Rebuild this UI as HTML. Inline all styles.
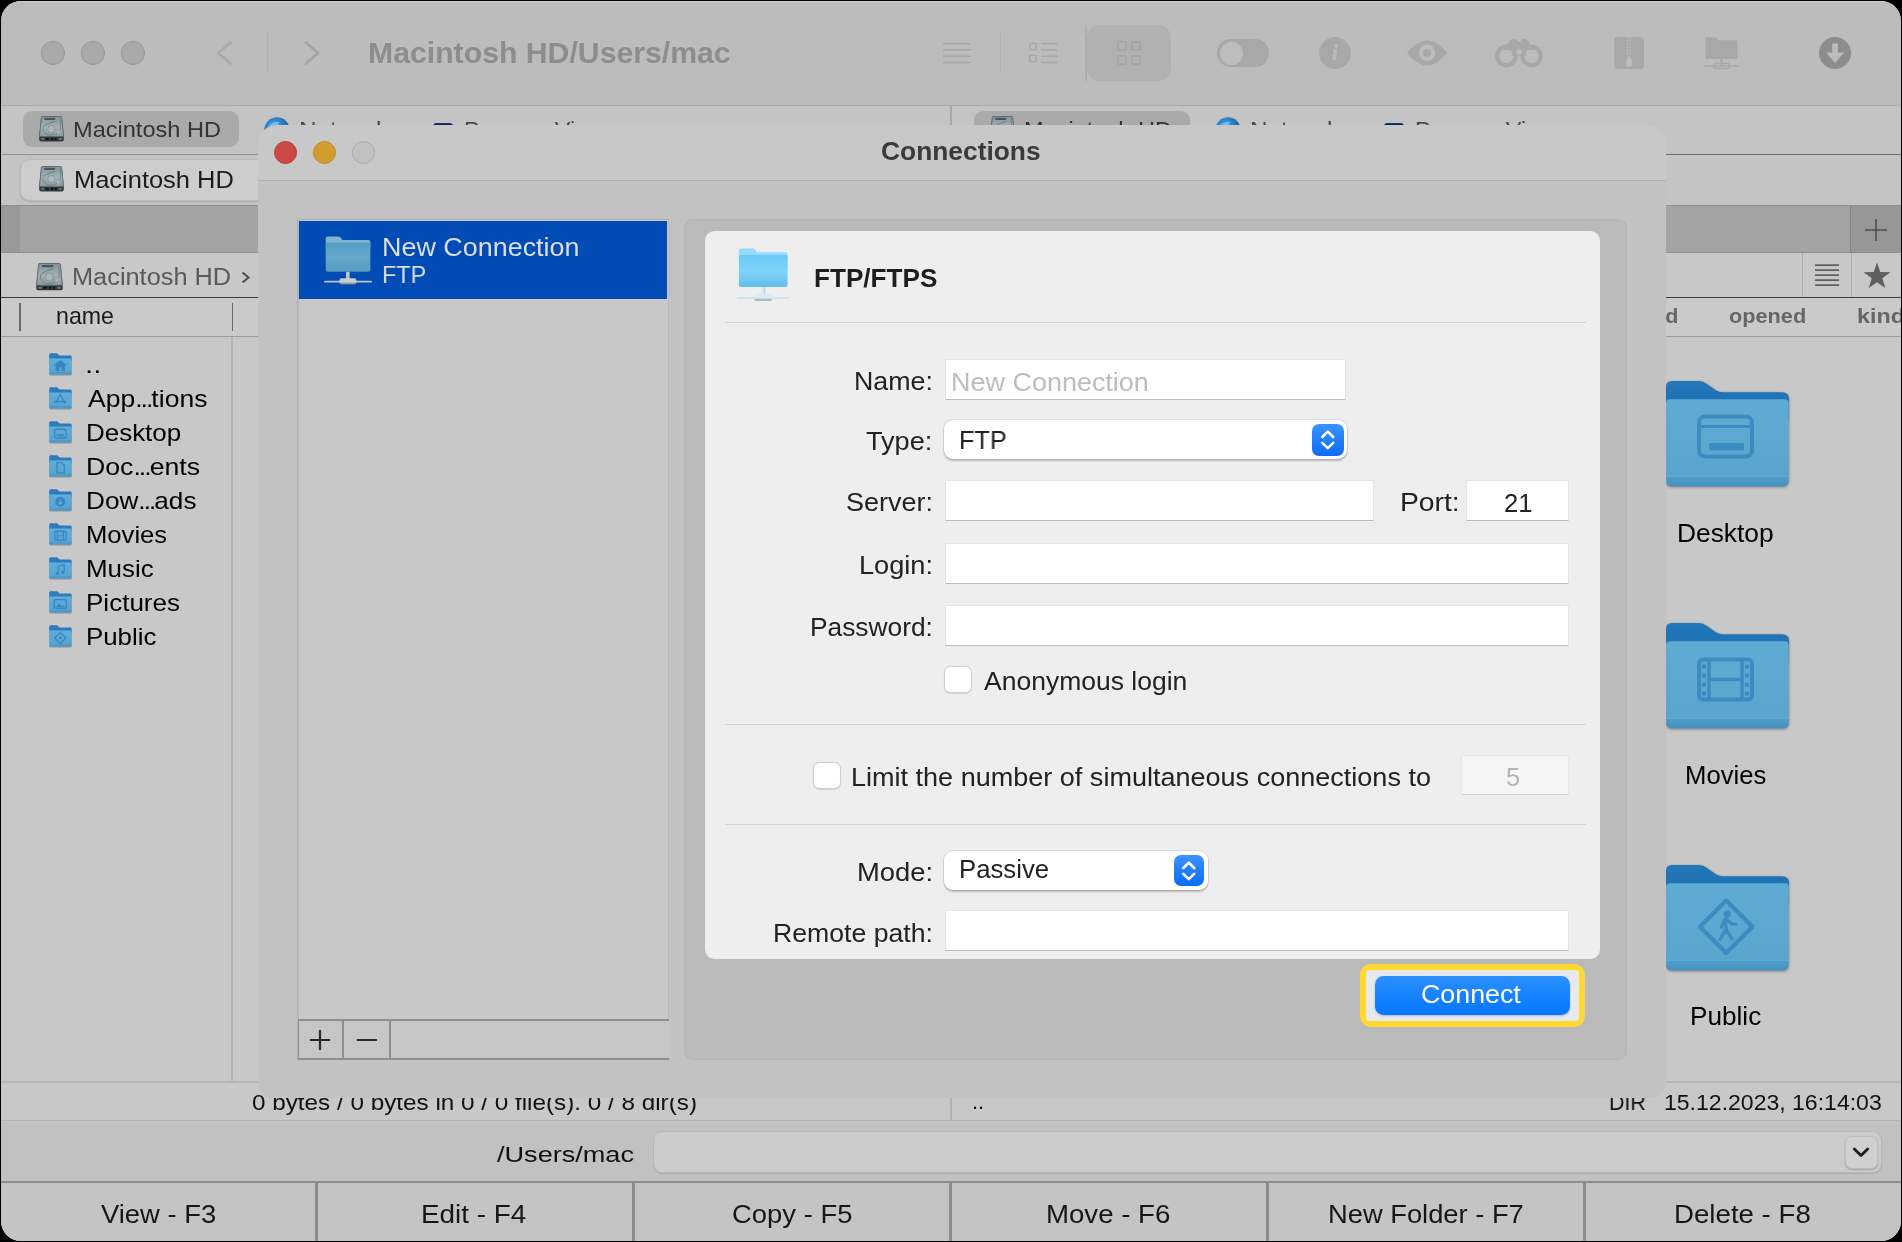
<!DOCTYPE html>
<html><head><meta charset="utf-8"><title>Commander One - Connections</title>
<style>
html,body{margin:0;padding:0;background:#000;}
body{width:1902px;height:1242px;overflow:hidden;position:relative;font-family:"Liberation Sans",sans-serif;}
#win{position:absolute;left:0;top:0;width:1902px;height:1242px;background:#c8c8c8;clip-path:inset(1px 1px 1px 1px round 20px);overflow:hidden;}
#win div,#win svg,#dlg div,#dlg svg{position:absolute;box-sizing:border-box;}
.t{line-height:40px;height:40px;white-space:nowrap;transform-origin:0 0;will-change:transform;}
#dlg{position:absolute;left:258px;top:125px;width:1408px;height:973px;background:#c2c2c2;border-radius:20px 20px 16px 16px;overflow:hidden;}
.inp{background:#fff;border:1px solid #e5e5e5;border-bottom-color:#bcbcbc;}
.chk{background:#fff;border:1px solid #cfcfcf;border-radius:6.5px;box-shadow:0 0.5px 1px rgba(0,0,0,.12);}
.sel{background:#fff;border-radius:9px;box-shadow:0 0 0 1px rgba(0,0,0,.07),0 1.5px 2px rgba(0,0,0,.22);}
.stp{border-radius:7px;background:linear-gradient(#3a93ff,#0a6cf5);}
</style></head><body>
<div id="win">
<div style="left:0px;top:0px;width:1902px;height:105px;background:#bcbcbc;"></div>
<div style="left:0px;top:1px;width:1902px;height:1px;background:#cbcbcb;"></div>
<div style="left:0px;top:104.5px;width:1902px;height:1.5px;background:#a9a9a9;"></div>
<div style="left:41px;top:41px;width:24px;height:24px;border-radius:50%;background:#aaaaaa;border:1px solid #949494;"></div>
<div style="left:81px;top:41px;width:24px;height:24px;border-radius:50%;background:#aaaaaa;border:1px solid #949494;"></div>
<div style="left:121px;top:41px;width:24px;height:24px;border-radius:50%;background:#aaaaaa;border:1px solid #949494;"></div>
<svg style="left:214px;top:38px;" width="20" height="30" viewBox="0 0 20 30"><path d="M16.5 4.5 L4 15 L16.5 25.5" fill="none" stroke="#a9a9a9" stroke-width="2.8" stroke-linecap="round" stroke-linejoin="round"/></svg>
<div style="left:267px;top:33px;width:1px;height:40px;background:#b0b0b0;"></div>
<svg style="left:302px;top:38px;" width="20" height="30" viewBox="0 0 20 30"><path d="M4 4.5 L16 15 L4 25.5" fill="none" stroke="#a4a4a4" stroke-width="2.8" stroke-linecap="round" stroke-linejoin="round"/></svg>
<div class="t" style="left:368.04px;top:32.61px;font-size:30px;color:#8d8d8d;font-weight:bold;transform:scaleX(1.0071);">Macintosh HD/Users/mac</div>
<svg style="left:943px;top:42px;" width="28" height="22" viewBox="0 0 28 22"><rect x="0" y="0.8" width="28" height="1.7" fill="#a8a8a8"/><rect x="0" y="7.1" width="28" height="1.7" fill="#a8a8a8"/><rect x="0" y="13.4" width="28" height="1.7" fill="#a8a8a8"/><rect x="0" y="19.6" width="28" height="1.7" fill="#a8a8a8"/></svg>
<div style="left:1000px;top:33px;width:1px;height:40px;background:#b0b0b0;"></div>
<svg style="left:1029px;top:42px;" width="29" height="22" viewBox="0 0 29 22"><rect x="0.8" y="1.3" width="6.4" height="6.4" rx="1.2" fill="none" stroke="#a8a8a8" stroke-width="1.6"/><rect x="0.8" y="13.3" width="6.4" height="6.4" rx="1.2" fill="none" stroke="#a8a8a8" stroke-width="1.6"/><rect x="12" y="0.8" width="16.5" height="1.7" fill="#a8a8a8"/><rect x="12" y="7.1" width="16.5" height="1.7" fill="#a8a8a8"/><rect x="12" y="13.4" width="16.5" height="1.7" fill="#a8a8a8"/><rect x="12" y="19.6" width="16.5" height="1.7" fill="#a8a8a8"/></svg>
<div style="left:1085px;top:25px;width:2px;height:56px;background:#adadad;"></div>
<div style="left:1087px;top:25px;width:84px;height:56px;background:#b1b1b1;border-radius:13px;"></div>
<svg style="left:1117px;top:41px;" width="24" height="24" viewBox="0 0 24 24"><rect x="0.9" y="0.9" width="8.2" height="8.2" rx="1.2" fill="none" stroke="#a4a4a4" stroke-width="1.7"/><rect x="0.9" y="14.9" width="8.2" height="8.2" rx="1.2" fill="none" stroke="#a4a4a4" stroke-width="1.7"/><rect x="14.9" y="0.9" width="8.2" height="8.2" rx="1.2" fill="none" stroke="#a4a4a4" stroke-width="1.7"/><rect x="14.9" y="14.9" width="8.2" height="8.2" rx="1.2" fill="none" stroke="#a4a4a4" stroke-width="1.7"/></svg>
<div style="left:1217px;top:39px;width:52px;height:28px;border-radius:14px;background:#a8a8a8;"></div>
<div style="left:1219.5px;top:41.5px;width:23.0px;height:23.0px;border-radius:50%;background:#bdbdbd;"></div>
<div style="left:1319px;top:37px;width:32px;height:32px;border-radius:50%;background:#a8a8a8;"></div>
<div class="t" style="left:1319px;width:32px;text-align:center;top:32.5px;font-family:'Liberation Serif',serif;font-style:italic;font-weight:bold;font-size:23px;color:#bcbcbc;">i</div>
<svg style="left:1407px;top:40px;" width="40" height="26" viewBox="0 0 40 26"><path d="M0 13 Q10 0.5 20 0.5 Q30 0.5 40 13 Q30 25.5 20 25.5 Q10 25.5 0 13Z" fill="#a8a8a8"/><circle cx="20" cy="13" r="8.2" fill="#bcbcbc"/><circle cx="20" cy="13" r="4" fill="#a8a8a8"/></svg>
<svg style="left:1495px;top:38px;" width="48" height="30" viewBox="0 0 48 30"><path d="M13 6 Q15 1 19 1 Q22 1 22.5 4 H25.5 Q26 1 29 1 Q33 1 35 6 L40 12 H8 Z" fill="#a8a8a8"/><circle cx="11.5" cy="18" r="9.2" fill="none" stroke="#a8a8a8" stroke-width="4.4"/><circle cx="36.5" cy="18" r="9.2" fill="none" stroke="#a8a8a8" stroke-width="4.4"/><rect x="17" y="8" width="14" height="10" fill="#a8a8a8"/><circle cx="24" cy="14" r="2.6" fill="#bcbcbc"/></svg>
<svg style="left:1614px;top:37px;" width="30" height="32" viewBox="0 0 30 32"><rect x="0" y="0" width="30" height="32" rx="3.5" fill="#a8a8a8"/><path d="M15 0 V19" stroke="#bcbcbc" stroke-width="4.2" stroke-dasharray="1.6 1.6"/><path d="M15 18 Q18.6 24 18.4 27 Q18 30 15 30 Q12 30 11.6 27 Q11.4 24 15 18Z" fill="#bcbcbc"/><path d="M15 0 V19" stroke="#a8a8a8" stroke-width="1.2"/></svg>
<svg style="left:1704px;top:37px;" width="35" height="33" viewBox="0 0 35 33"><path d="M1.5 2 Q1.5 0.3 3.2 0.3 H10.5 Q11.8 0.3 12.6 1.2 L14.6 3.2 H31.5 Q33.5 3.2 33.5 5.2 V20 Q33.5 22 31.5 22 H3.5 Q1.5 22 1.5 20 Z" fill="#a8a8a8"/><rect x="16.3" y="22" width="2.4" height="6" fill="#a8a8a8"/><rect x="0" y="28.2" width="35" height="1.6" fill="#a8a8a8"/><rect x="9.5" y="26.6" width="16" height="5" rx="2" fill="none" stroke="#a8a8a8" stroke-width="1.5"/></svg>
<div style="left:1819px;top:37px;width:32px;height:32px;border-radius:50%;background:#8d8d8d;"></div>
<svg style="left:1819px;top:37px;" width="32" height="32" viewBox="0 0 32 32"><path d="M13.2 6.5 H18.8 V15.5 H24.8 L16 26 L7.2 15.5 H13.2 Z" fill="#bcbcbc"/></svg>
<div style="left:0px;top:106px;width:1902px;height:99px;background:#c4c4c4;"></div>
<div style="left:0px;top:154px;width:951px;height:1px;background:#919191;"></div>
<div style="left:951px;top:154px;width:951px;height:1px;background:#6e6e6e;"></div>
<div style="left:950px;top:106px;width:2px;height:48px;background:#a9a9a9;"></div>
<div style="left:23px;top:111px;width:216px;height:36px;background:#aaaaaa;border-radius:9px;"></div>
<svg style="left:37.5px;top:114.5px;" width="27" height="27" viewBox="0 0 27 27"><defs><linearGradient id="dg" x1="0" y1="0" x2="0" y2="1"><stop offset="0" stop-color="#85949b"/><stop offset="0.55" stop-color="#a3b1b7"/><stop offset="1" stop-color="#8b9aa0"/></linearGradient></defs><path d="M4.6 1.2 H22.4 Q23.7 1.2 23.9 2.5 L25.8 21.2 V24.6 Q25.8 26.4 24 26.4 H3 Q1.2 26.4 1.2 24.6 V21.2 L3.1 2.5 Q3.3 1.2 4.6 1.2Z" fill="#30383c"/><path d="M4.7 1.5 H22.3 Q23.4 1.5 23.6 2.6 L25.5 21.6 H1.5 L3.4 2.6 Q3.6 1.5 4.7 1.5Z" fill="url(#dg)" stroke="#5f6c72" stroke-width="0.7"/><rect x="6.4" y="2.8" width="10.6" height="2.1" rx="0.5" fill="#4b555a"/><path d="M17.4 6.5 C 10.5 8.2, 5 10, 5 13.9 C 5 17.6, 8.6 20.1, 12.6 20.1 C 17.6 20.1, 22 17.4, 22.4 13.6 C 22.7 10, 22.3 6, 21.9 3" fill="none" stroke="#6a787e" stroke-width="0.8"/><circle cx="13.4" cy="14.1" r="3.7" fill="#a9b8be" stroke="#76858b" stroke-width="0.6"/><path d="M19.2 18.2 L21.8 16" stroke="#dfe6e8" stroke-width="0.9"/><rect x="3" y="23" width="3.4" height="1.8" rx="0.5" fill="#6d797e"/><rect x="20.6" y="23" width="3.4" height="1.8" rx="0.5" fill="#6d797e"/><rect x="8" y="22.9" width="2.6" height="2" fill="#111"/><rect x="13" y="22.9" width="2.2" height="2" fill="#111"/><rect x="17" y="22.9" width="1.6" height="2" fill="#111"/></svg>
<div class="t" style="left:72.51px;top:109.77px;font-size:22.6px;color:#333;transform:scaleX(1.0431);">Macintosh HD</div>
<svg style="left:263.5px;top:116.5px;" width="26" height="26" viewBox="0 0 30 30"><defs><radialGradient id="gl" cx="0.4" cy="0.35" r="0.7"><stop offset="0" stop-color="#4aa8e8"/><stop offset="1" stop-color="#0a4f9e"/></radialGradient></defs><circle cx="15" cy="15" r="14.6" fill="url(#gl)"/><path d="M4 12 Q10 4 18 6 Q14 10 16 15 Q10 18 6 16Z M18 18 Q24 14 27 18 Q25 25 19 26Z" fill="#7cc9f2" opacity=".75"/></svg>
<div class="t" style="left:298.85px;top:109.77px;font-size:22.6px;color:#4a4a4a;transform:scaleX(1.0772);">Network</div>
<div style="left:432.7px;top:122.7px;width:20.0px;height:18.299999999999997px;background:#0c2a52;border-radius:3px;border:1.5px solid #10366b;"></div>
<div class="t" style="left:464.13px;top:109.77px;font-size:22.6px;color:#4a4a4a;transform:scaleX(1.0326);">Process Viewer</div>
<div style="left:974px;top:111px;width:216px;height:36px;background:#aaaaaa;border-radius:9px;"></div>
<svg style="left:988.5px;top:114.5px;" width="27" height="27" viewBox="0 0 27 27"><defs><linearGradient id="dg" x1="0" y1="0" x2="0" y2="1"><stop offset="0" stop-color="#85949b"/><stop offset="0.55" stop-color="#a3b1b7"/><stop offset="1" stop-color="#8b9aa0"/></linearGradient></defs><path d="M4.6 1.2 H22.4 Q23.7 1.2 23.9 2.5 L25.8 21.2 V24.6 Q25.8 26.4 24 26.4 H3 Q1.2 26.4 1.2 24.6 V21.2 L3.1 2.5 Q3.3 1.2 4.6 1.2Z" fill="#30383c"/><path d="M4.7 1.5 H22.3 Q23.4 1.5 23.6 2.6 L25.5 21.6 H1.5 L3.4 2.6 Q3.6 1.5 4.7 1.5Z" fill="url(#dg)" stroke="#5f6c72" stroke-width="0.7"/><rect x="6.4" y="2.8" width="10.6" height="2.1" rx="0.5" fill="#4b555a"/><path d="M17.4 6.5 C 10.5 8.2, 5 10, 5 13.9 C 5 17.6, 8.6 20.1, 12.6 20.1 C 17.6 20.1, 22 17.4, 22.4 13.6 C 22.7 10, 22.3 6, 21.9 3" fill="none" stroke="#6a787e" stroke-width="0.8"/><circle cx="13.4" cy="14.1" r="3.7" fill="#a9b8be" stroke="#76858b" stroke-width="0.6"/><path d="M19.2 18.2 L21.8 16" stroke="#dfe6e8" stroke-width="0.9"/><rect x="3" y="23" width="3.4" height="1.8" rx="0.5" fill="#6d797e"/><rect x="20.6" y="23" width="3.4" height="1.8" rx="0.5" fill="#6d797e"/><rect x="8" y="22.9" width="2.6" height="2" fill="#111"/><rect x="13" y="22.9" width="2.2" height="2" fill="#111"/><rect x="17" y="22.9" width="1.6" height="2" fill="#111"/></svg>
<div class="t" style="left:1023.51px;top:109.77px;font-size:22.6px;color:#333;transform:scaleX(1.0431);">Macintosh HD</div>
<svg style="left:1214.5px;top:116.5px;" width="26" height="26" viewBox="0 0 30 30"><defs><radialGradient id="gl" cx="0.4" cy="0.35" r="0.7"><stop offset="0" stop-color="#4aa8e8"/><stop offset="1" stop-color="#0a4f9e"/></radialGradient></defs><circle cx="15" cy="15" r="14.6" fill="url(#gl)"/><path d="M4 12 Q10 4 18 6 Q14 10 16 15 Q10 18 6 16Z M18 18 Q24 14 27 18 Q25 25 19 26Z" fill="#7cc9f2" opacity=".75"/></svg>
<div class="t" style="left:1249.85px;top:109.77px;font-size:22.6px;color:#4a4a4a;transform:scaleX(1.0772);">Network</div>
<div style="left:1383.7px;top:122.7px;width:20.0px;height:18.299999999999997px;background:#0c2a52;border-radius:3px;border:1.5px solid #10366b;"></div>
<div class="t" style="left:1415.13px;top:109.77px;font-size:22.6px;color:#4a4a4a;transform:scaleX(1.0326);">Process Viewer</div>
<div style="left:20px;top:159px;width:450px;height:42px;background:#cdcdcd;border:1px solid #bababa;border-radius:10px;box-shadow:0 1px 2px rgba(0,0,0,.16);"></div>
<svg style="left:37.5px;top:165px;" width="27" height="27" viewBox="0 0 27 27"><defs><linearGradient id="dg" x1="0" y1="0" x2="0" y2="1"><stop offset="0" stop-color="#85949b"/><stop offset="0.55" stop-color="#a3b1b7"/><stop offset="1" stop-color="#8b9aa0"/></linearGradient></defs><path d="M4.6 1.2 H22.4 Q23.7 1.2 23.9 2.5 L25.8 21.2 V24.6 Q25.8 26.4 24 26.4 H3 Q1.2 26.4 1.2 24.6 V21.2 L3.1 2.5 Q3.3 1.2 4.6 1.2Z" fill="#30383c"/><path d="M4.7 1.5 H22.3 Q23.4 1.5 23.6 2.6 L25.5 21.6 H1.5 L3.4 2.6 Q3.6 1.5 4.7 1.5Z" fill="url(#dg)" stroke="#5f6c72" stroke-width="0.7"/><rect x="6.4" y="2.8" width="10.6" height="2.1" rx="0.5" fill="#4b555a"/><path d="M17.4 6.5 C 10.5 8.2, 5 10, 5 13.9 C 5 17.6, 8.6 20.1, 12.6 20.1 C 17.6 20.1, 22 17.4, 22.4 13.6 C 22.7 10, 22.3 6, 21.9 3" fill="none" stroke="#6a787e" stroke-width="0.8"/><circle cx="13.4" cy="14.1" r="3.7" fill="#a9b8be" stroke="#76858b" stroke-width="0.6"/><path d="M19.2 18.2 L21.8 16" stroke="#dfe6e8" stroke-width="0.9"/><rect x="3" y="23" width="3.4" height="1.8" rx="0.5" fill="#6d797e"/><rect x="20.6" y="23" width="3.4" height="1.8" rx="0.5" fill="#6d797e"/><rect x="8" y="22.9" width="2.6" height="2" fill="#111"/><rect x="13" y="22.9" width="2.2" height="2" fill="#111"/><rect x="17" y="22.9" width="1.6" height="2" fill="#111"/></svg>
<div class="t" style="left:73.96px;top:160.12px;font-size:23.9px;color:#1c1c1c;transform:scaleX(1.0652);">Macintosh HD</div>
<div style="left:0px;top:205px;width:1902px;height:48px;background:#a4a4a4;border-top:1.5px solid #8d8d8d;border-bottom:1.5px solid #8d8d8d;"></div>
<div style="left:0px;top:206px;width:20px;height:46px;background:#999999;"></div>
<div style="left:1850px;top:205px;width:52px;height:48px;background:#979797;border-left:1.5px solid #838383;border-top:1.5px solid #8d8d8d;border-bottom:1.5px solid #8d8d8d;"></div>
<svg style="left:1864px;top:218px;" width="24" height="24" viewBox="0 0 24 24"><path d="M12 1 V23 M1 12 H23" stroke="#4e4e4e" stroke-width="1.6"/></svg>
<div style="left:950px;top:205px;width:2px;height:48px;background:#8d8d8d;"></div>
<div style="left:0px;top:253px;width:1902px;height:44px;background:#c8c8c8;"></div>
<svg style="left:34.5px;top:262px;" width="29" height="29" viewBox="0 0 27 27"><defs><linearGradient id="dg" x1="0" y1="0" x2="0" y2="1"><stop offset="0" stop-color="#85949b"/><stop offset="0.55" stop-color="#a3b1b7"/><stop offset="1" stop-color="#8b9aa0"/></linearGradient></defs><path d="M4.6 1.2 H22.4 Q23.7 1.2 23.9 2.5 L25.8 21.2 V24.6 Q25.8 26.4 24 26.4 H3 Q1.2 26.4 1.2 24.6 V21.2 L3.1 2.5 Q3.3 1.2 4.6 1.2Z" fill="#30383c"/><path d="M4.7 1.5 H22.3 Q23.4 1.5 23.6 2.6 L25.5 21.6 H1.5 L3.4 2.6 Q3.6 1.5 4.7 1.5Z" fill="url(#dg)" stroke="#5f6c72" stroke-width="0.7"/><rect x="6.4" y="2.8" width="10.6" height="2.1" rx="0.5" fill="#4b555a"/><path d="M17.4 6.5 C 10.5 8.2, 5 10, 5 13.9 C 5 17.6, 8.6 20.1, 12.6 20.1 C 17.6 20.1, 22 17.4, 22.4 13.6 C 22.7 10, 22.3 6, 21.9 3" fill="none" stroke="#6a787e" stroke-width="0.8"/><circle cx="13.4" cy="14.1" r="3.7" fill="#a9b8be" stroke="#76858b" stroke-width="0.6"/><path d="M19.2 18.2 L21.8 16" stroke="#dfe6e8" stroke-width="0.9"/><rect x="3" y="23" width="3.4" height="1.8" rx="0.5" fill="#6d797e"/><rect x="20.6" y="23" width="3.4" height="1.8" rx="0.5" fill="#6d797e"/><rect x="8" y="22.9" width="2.6" height="2" fill="#111"/><rect x="13" y="22.9" width="2.2" height="2" fill="#111"/><rect x="17" y="22.9" width="1.6" height="2" fill="#111"/></svg>
<div class="t" style="left:72.27px;top:256.83px;font-size:23px;color:#595959;transform:scaleX(1.1020);">Macintosh HD</div>
<svg style="left:240px;top:266px;" width="12" height="22" viewBox="0 0 12 22"><path d="M2.5 6.5 L8.5 11.5 L2.5 16.5" fill="none" stroke="#4d4d4d" stroke-width="2"/></svg>
<div style="left:1802px;top:253px;width:1px;height:44px;background:#adadad;"></div>
<div style="left:1851px;top:253px;width:1px;height:44px;background:#adadad;"></div>
<svg style="left:1815px;top:264px;" width="24" height="23" viewBox="0 0 24 23"><rect x="0" y="0.3" width="24" height="1.7" fill="#5f5f5f"/><rect x="0" y="5.3" width="24" height="1.7" fill="#5f5f5f"/><rect x="0" y="10.3" width="24" height="1.7" fill="#5f5f5f"/><rect x="0" y="15.3" width="24" height="1.7" fill="#5f5f5f"/><rect x="0" y="20.3" width="24" height="1.7" fill="#5f5f5f"/></svg>
<svg style="left:1863px;top:262px;" width="28" height="27" viewBox="0 0 28 27"><path d="M14 0.5 L17.3 10 L27.4 10.2 L19.3 16.3 L22.3 26 L14 20.2 L5.7 26 L8.7 16.3 L0.6 10.2 L10.7 10 Z" fill="#5f5f5f"/></svg>
<div style="left:0px;top:296.5px;width:1902px;height:1.5px;background:#3c3c3c;"></div>
<div style="left:0px;top:298px;width:1902px;height:39px;background:#cacaca;"></div>
<div style="left:19px;top:303px;width:1.5px;height:28px;background:#6a6a6a;"></div>
<div style="left:231.5px;top:303px;width:1.5px;height:28px;background:#6a6a6a;"></div>
<div class="t" style="left:56.39px;top:295.96px;font-size:23.2px;color:#1a1a1a;transform:scaleX(0.9988);">name</div>
<div class="t" style="left:1588.60px;top:295.57px;font-size:20px;color:#666;font-weight:bold;transform:scaleX(1.0731);">modified</div>
<div class="t" style="left:1729.24px;top:295.57px;font-size:20px;color:#666;font-weight:bold;transform:scaleX(1.0854);">opened</div>
<div class="t" style="left:1856.67px;top:295.57px;font-size:20px;color:#666;font-weight:bold;transform:scaleX(1.1641);">kind</div>
<div style="left:0px;top:336px;width:1902px;height:1px;background:#9c9c9c;"></div>
<div style="left:0px;top:337px;width:1902px;height:745px;background:#c8c8c8;"></div>
<div style="left:231px;top:337px;width:2px;height:745px;background:#b3b3b3;"></div>
<div style="left:950px;top:253px;width:2px;height:868px;background:#b1b1b1;"></div>
<svg style="left:48.7px;top:353.2px;filter:drop-shadow(0 1px 0.6px rgba(0,0,0,.28));" width="23" height="22" viewBox="0 0 23 22"><defs><linearGradient id="sf" x1="0" y1="0" x2="0" y2="1"><stop offset="0" stop-color="#62aedb"/><stop offset="0.85" stop-color="#58a4d1"/><stop offset="0.87" stop-color="#4b99ca"/><stop offset="1" stop-color="#4f9dcd"/></linearGradient></defs><path d="M0.3 1.4 Q0.3 0.3 1.4 0.3 H7.6 Q8.4 0.3 9 0.9 L10.6 2.6 H21.3 Q22.6 2.6 22.6 3.9 V8 H0.3 Z" fill="#2a7cbf"/><path d="M0.3 5.4 H22.6 V20.2 Q22.6 21.5 21.3 21.5 H1.6 Q0.3 21.5 0.3 20.2 Z" fill="url(#sf)"/><g transform="translate(11.3 12.9) scale(1.32) translate(-11.5 -12.8)"><path d="M11.5 8.2 L6.6 12.4 H8 V16.6 H10.6 V13.8 H12.4 V16.6 H15 V12.4 H16.4 Z" fill="#3787c3"/></g></svg>
<div class="t" style="left:85.35px;top:344.89px;font-size:23.4px;color:#000;transform:scaleX(1.2596);">..</div>
<svg style="left:48.7px;top:387.2px;filter:drop-shadow(0 1px 0.6px rgba(0,0,0,.28));" width="23" height="22" viewBox="0 0 23 22"><defs><linearGradient id="sf" x1="0" y1="0" x2="0" y2="1"><stop offset="0" stop-color="#62aedb"/><stop offset="0.85" stop-color="#58a4d1"/><stop offset="0.87" stop-color="#4b99ca"/><stop offset="1" stop-color="#4f9dcd"/></linearGradient></defs><path d="M0.3 1.4 Q0.3 0.3 1.4 0.3 H7.6 Q8.4 0.3 9 0.9 L10.6 2.6 H21.3 Q22.6 2.6 22.6 3.9 V8 H0.3 Z" fill="#2a7cbf"/><path d="M0.3 5.4 H22.6 V20.2 Q22.6 21.5 21.3 21.5 H1.6 Q0.3 21.5 0.3 20.2 Z" fill="url(#sf)"/><g transform="translate(11.3 12.9) scale(1.32) translate(-11.5 -12.8)"><path d="M11.5 8.5 L8 15.5 M11.5 8.5 L15 15.5 M7 14 H16" stroke="#3787c3" stroke-width="1.1" fill="none"/></g></svg>
<div class="t" style="left:88.00px;top:378.89px;font-size:23.4px;color:#000;transform:scaleX(1.1342);">App<span style="letter-spacing:-1.75px">...</span>tions</div>
<svg style="left:48.7px;top:421.2px;filter:drop-shadow(0 1px 0.6px rgba(0,0,0,.28));" width="23" height="22" viewBox="0 0 23 22"><defs><linearGradient id="sf" x1="0" y1="0" x2="0" y2="1"><stop offset="0" stop-color="#62aedb"/><stop offset="0.85" stop-color="#58a4d1"/><stop offset="0.87" stop-color="#4b99ca"/><stop offset="1" stop-color="#4f9dcd"/></linearGradient></defs><path d="M0.3 1.4 Q0.3 0.3 1.4 0.3 H7.6 Q8.4 0.3 9 0.9 L10.6 2.6 H21.3 Q22.6 2.6 22.6 3.9 V8 H0.3 Z" fill="#2a7cbf"/><path d="M0.3 5.4 H22.6 V20.2 Q22.6 21.5 21.3 21.5 H1.6 Q0.3 21.5 0.3 20.2 Z" fill="url(#sf)"/><g transform="translate(11.3 12.9) scale(1.32) translate(-11.5 -12.8)"><rect x="7.2" y="9.3" width="8.6" height="6.6" rx="1" fill="none" stroke="#3787c3" stroke-width="1"/><rect x="8.8" y="13" width="5.4" height="1.5" fill="#3787c3"/></g></svg>
<div class="t" style="left:85.92px;top:412.89px;font-size:23.4px;color:#000;transform:scaleX(1.1091);">Desktop</div>
<svg style="left:48.7px;top:455.2px;filter:drop-shadow(0 1px 0.6px rgba(0,0,0,.28));" width="23" height="22" viewBox="0 0 23 22"><defs><linearGradient id="sf" x1="0" y1="0" x2="0" y2="1"><stop offset="0" stop-color="#62aedb"/><stop offset="0.85" stop-color="#58a4d1"/><stop offset="0.87" stop-color="#4b99ca"/><stop offset="1" stop-color="#4f9dcd"/></linearGradient></defs><path d="M0.3 1.4 Q0.3 0.3 1.4 0.3 H7.6 Q8.4 0.3 9 0.9 L10.6 2.6 H21.3 Q22.6 2.6 22.6 3.9 V8 H0.3 Z" fill="#2a7cbf"/><path d="M0.3 5.4 H22.6 V20.2 Q22.6 21.5 21.3 21.5 H1.6 Q0.3 21.5 0.3 20.2 Z" fill="url(#sf)"/><g transform="translate(11.3 12.9) scale(1.32) translate(-11.5 -12.8)"><path d="M9 8.8 H12.6 L14.6 10.8 V16.6 H9 Z" fill="none" stroke="#3787c3" stroke-width="1"/></g></svg>
<div class="t" style="left:85.87px;top:446.89px;font-size:23.4px;color:#000;transform:scaleX(1.1403);">Doc<span style="letter-spacing:-1.75px">...</span>ents</div>
<svg style="left:48.7px;top:489.2px;filter:drop-shadow(0 1px 0.6px rgba(0,0,0,.28));" width="23" height="22" viewBox="0 0 23 22"><defs><linearGradient id="sf" x1="0" y1="0" x2="0" y2="1"><stop offset="0" stop-color="#62aedb"/><stop offset="0.85" stop-color="#58a4d1"/><stop offset="0.87" stop-color="#4b99ca"/><stop offset="1" stop-color="#4f9dcd"/></linearGradient></defs><path d="M0.3 1.4 Q0.3 0.3 1.4 0.3 H7.6 Q8.4 0.3 9 0.9 L10.6 2.6 H21.3 Q22.6 2.6 22.6 3.9 V8 H0.3 Z" fill="#2a7cbf"/><path d="M0.3 5.4 H22.6 V20.2 Q22.6 21.5 21.3 21.5 H1.6 Q0.3 21.5 0.3 20.2 Z" fill="url(#sf)"/><g transform="translate(11.3 12.9) scale(1.32) translate(-11.5 -12.8)"><circle cx="11.5" cy="12.7" r="3.8" fill="#3787c3"/><path d="M11.5 10.6 V14.4 M9.9 13 L11.5 14.6 L13.1 13" stroke="#66acd6" stroke-width="0.9" fill="none"/></g></svg>
<div class="t" style="left:85.91px;top:480.89px;font-size:23.4px;color:#000;transform:scaleX(1.1185);">Dow<span style="letter-spacing:-1.75px">...</span>ads</div>
<svg style="left:48.7px;top:523.2px;filter:drop-shadow(0 1px 0.6px rgba(0,0,0,.28));" width="23" height="22" viewBox="0 0 23 22"><defs><linearGradient id="sf" x1="0" y1="0" x2="0" y2="1"><stop offset="0" stop-color="#62aedb"/><stop offset="0.85" stop-color="#58a4d1"/><stop offset="0.87" stop-color="#4b99ca"/><stop offset="1" stop-color="#4f9dcd"/></linearGradient></defs><path d="M0.3 1.4 Q0.3 0.3 1.4 0.3 H7.6 Q8.4 0.3 9 0.9 L10.6 2.6 H21.3 Q22.6 2.6 22.6 3.9 V8 H0.3 Z" fill="#2a7cbf"/><path d="M0.3 5.4 H22.6 V20.2 Q22.6 21.5 21.3 21.5 H1.6 Q0.3 21.5 0.3 20.2 Z" fill="url(#sf)"/><g transform="translate(11.3 12.9) scale(1.32) translate(-11.5 -12.8)"><rect x="7.2" y="9.3" width="8.6" height="6.8" rx="0.8" fill="none" stroke="#3787c3" stroke-width="1"/><path d="M9.2 9.3 V16.1 M13.8 9.3 V16.1 M9.2 12.7 H13.8" stroke="#3787c3" stroke-width="0.9"/></g></svg>
<div class="t" style="left:85.95px;top:514.89px;font-size:23.4px;color:#000;transform:scaleX(1.0953);">Movies</div>
<svg style="left:48.7px;top:557.2px;filter:drop-shadow(0 1px 0.6px rgba(0,0,0,.28));" width="23" height="22" viewBox="0 0 23 22"><defs><linearGradient id="sf" x1="0" y1="0" x2="0" y2="1"><stop offset="0" stop-color="#62aedb"/><stop offset="0.85" stop-color="#58a4d1"/><stop offset="0.87" stop-color="#4b99ca"/><stop offset="1" stop-color="#4f9dcd"/></linearGradient></defs><path d="M0.3 1.4 Q0.3 0.3 1.4 0.3 H7.6 Q8.4 0.3 9 0.9 L10.6 2.6 H21.3 Q22.6 2.6 22.6 3.9 V8 H0.3 Z" fill="#2a7cbf"/><path d="M0.3 5.4 H22.6 V20.2 Q22.6 21.5 21.3 21.5 H1.6 Q0.3 21.5 0.3 20.2 Z" fill="url(#sf)"/><g transform="translate(11.3 12.9) scale(1.32) translate(-11.5 -12.8)"><path d="M10 15.5 V10 L14.4 9 V14.5" stroke="#3787c3" stroke-width="1" fill="none"/><circle cx="9.1" cy="15.5" r="1.2" fill="#3787c3"/><circle cx="13.5" cy="14.5" r="1.2" fill="#3787c3"/></g></svg>
<div class="t" style="left:85.92px;top:548.89px;font-size:23.4px;color:#000;transform:scaleX(1.1089);">Music</div>
<svg style="left:48.7px;top:591.2px;filter:drop-shadow(0 1px 0.6px rgba(0,0,0,.28));" width="23" height="22" viewBox="0 0 23 22"><defs><linearGradient id="sf" x1="0" y1="0" x2="0" y2="1"><stop offset="0" stop-color="#62aedb"/><stop offset="0.85" stop-color="#58a4d1"/><stop offset="0.87" stop-color="#4b99ca"/><stop offset="1" stop-color="#4f9dcd"/></linearGradient></defs><path d="M0.3 1.4 Q0.3 0.3 1.4 0.3 H7.6 Q8.4 0.3 9 0.9 L10.6 2.6 H21.3 Q22.6 2.6 22.6 3.9 V8 H0.3 Z" fill="#2a7cbf"/><path d="M0.3 5.4 H22.6 V20.2 Q22.6 21.5 21.3 21.5 H1.6 Q0.3 21.5 0.3 20.2 Z" fill="url(#sf)"/><g transform="translate(11.3 12.9) scale(1.32) translate(-11.5 -12.8)"><rect x="7" y="9.5" width="9" height="6.6" rx="0.8" fill="none" stroke="#3787c3" stroke-width="1"/><path d="M8 15 L10.5 12.5 L12.3 14.3 L13.4 13.4 L15 15 Z" fill="#3787c3"/></g></svg>
<div class="t" style="left:85.92px;top:582.89px;font-size:23.4px;color:#000;transform:scaleX(1.1127);">Pictures</div>
<svg style="left:48.7px;top:625.2px;filter:drop-shadow(0 1px 0.6px rgba(0,0,0,.28));" width="23" height="22" viewBox="0 0 23 22"><defs><linearGradient id="sf" x1="0" y1="0" x2="0" y2="1"><stop offset="0" stop-color="#62aedb"/><stop offset="0.85" stop-color="#58a4d1"/><stop offset="0.87" stop-color="#4b99ca"/><stop offset="1" stop-color="#4f9dcd"/></linearGradient></defs><path d="M0.3 1.4 Q0.3 0.3 1.4 0.3 H7.6 Q8.4 0.3 9 0.9 L10.6 2.6 H21.3 Q22.6 2.6 22.6 3.9 V8 H0.3 Z" fill="#2a7cbf"/><path d="M0.3 5.4 H22.6 V20.2 Q22.6 21.5 21.3 21.5 H1.6 Q0.3 21.5 0.3 20.2 Z" fill="url(#sf)"/><g transform="translate(11.3 12.9) scale(1.32) translate(-11.5 -12.8)"><path d="M11.5 8.6 L15.7 12.8 L11.5 17 L7.3 12.8 Z" fill="none" stroke="#3787c3" stroke-width="1"/><circle cx="11.5" cy="12.8" r="1.1" fill="#3787c3"/></g></svg>
<div class="t" style="left:85.93px;top:616.89px;font-size:23.4px;color:#000;transform:scaleX(1.1043);">Public</div>
<svg style="left:1666px;top:381px;filter:drop-shadow(0 1.5px 1.5px rgba(0,0,0,.38));" width="123" height="108" viewBox="0 0 123 108"><defs><linearGradient id="bf" x1="0" y1="0" x2="0" y2="1"><stop offset="0" stop-color="#60abd3"/><stop offset="0.875" stop-color="#5aa5cd"/><stop offset="0.88" stop-color="#6cb3d9"/><stop offset="0.895" stop-color="#509dc9"/><stop offset="1" stop-color="#4391c2"/></linearGradient><linearGradient id="bb" x1="0" y1="0" x2="0" y2="1"><stop offset="0" stop-color="#2378b9"/><stop offset="1" stop-color="#1a6bad"/></linearGradient></defs><path d="M0 6 Q0 0 6 0 H33 Q37.5 0 41 3 L50 9.3 Q53 11.2 57 11.2 H116 Q123 11.2 123 18 V40 H0 Z" fill="url(#bb)"/><path d="M0 22.5 Q0 18.3 4.2 18.3 H118.6 Q122.8 18.3 122.8 22.5 V99 Q122.8 105.3 116.5 105.3 H6.3 Q0 105.3 0 99 Z" fill="url(#bf)"/><g transform="translate(-4 0.6)"><rect x="37" y="35" width="53" height="40" rx="6" fill="none" stroke="#3c8cc1" stroke-width="4"/><path d="M37 45 H90" stroke="#3c8cc1" stroke-width="3"/><rect x="47" y="61.5" width="35" height="7.3" rx="1.5" fill="#3c8cc1"/></g></svg>
<div class="t" style="left:1676.89px;top:512.84px;font-size:25px;color:#000;transform:scaleX(1.0539);">Desktop</div>
<svg style="left:1666px;top:623px;filter:drop-shadow(0 1.5px 1.5px rgba(0,0,0,.38));" width="123" height="108" viewBox="0 0 123 108"><defs><linearGradient id="bf" x1="0" y1="0" x2="0" y2="1"><stop offset="0" stop-color="#60abd3"/><stop offset="0.875" stop-color="#5aa5cd"/><stop offset="0.88" stop-color="#6cb3d9"/><stop offset="0.895" stop-color="#509dc9"/><stop offset="1" stop-color="#4391c2"/></linearGradient><linearGradient id="bb" x1="0" y1="0" x2="0" y2="1"><stop offset="0" stop-color="#2378b9"/><stop offset="1" stop-color="#1a6bad"/></linearGradient></defs><path d="M0 6 Q0 0 6 0 H33 Q37.5 0 41 3 L50 9.3 Q53 11.2 57 11.2 H116 Q123 11.2 123 18 V40 H0 Z" fill="url(#bb)"/><path d="M0 22.5 Q0 18.3 4.2 18.3 H118.6 Q122.8 18.3 122.8 22.5 V99 Q122.8 105.3 116.5 105.3 H6.3 Q0 105.3 0 99 Z" fill="url(#bf)"/><g transform="translate(-4 0.6)"><rect x="37" y="36" width="53" height="40" rx="4" fill="none" stroke="#3c8cc1" stroke-width="4"/><path d="M47 36 V76 M80 36 V76 M47 56 H80" stroke="#3c8cc1" stroke-width="3.5"/><g fill="#3c8cc1"><rect x="40" y="41" width="4" height="4"/><rect x="40" y="50" width="4" height="4"/><rect x="40" y="59" width="4" height="4"/><rect x="40" y="68" width="4" height="4"/><rect x="83" y="41" width="4" height="4"/><rect x="83" y="50" width="4" height="4"/><rect x="83" y="59" width="4" height="4"/><rect x="83" y="68" width="4" height="4"/></g></g></svg>
<div class="t" style="left:1684.55px;top:754.54px;font-size:25px;color:#000;transform:scaleX(1.0265);">Movies</div>
<svg style="left:1666px;top:865px;filter:drop-shadow(0 1.5px 1.5px rgba(0,0,0,.38));" width="123" height="108" viewBox="0 0 123 108"><defs><linearGradient id="bf" x1="0" y1="0" x2="0" y2="1"><stop offset="0" stop-color="#60abd3"/><stop offset="0.875" stop-color="#5aa5cd"/><stop offset="0.88" stop-color="#6cb3d9"/><stop offset="0.895" stop-color="#509dc9"/><stop offset="1" stop-color="#4391c2"/></linearGradient><linearGradient id="bb" x1="0" y1="0" x2="0" y2="1"><stop offset="0" stop-color="#2378b9"/><stop offset="1" stop-color="#1a6bad"/></linearGradient></defs><path d="M0 6 Q0 0 6 0 H33 Q37.5 0 41 3 L50 9.3 Q53 11.2 57 11.2 H116 Q123 11.2 123 18 V40 H0 Z" fill="url(#bb)"/><path d="M0 22.5 Q0 18.3 4.2 18.3 H118.6 Q122.8 18.3 122.8 22.5 V99 Q122.8 105.3 116.5 105.3 H6.3 Q0 105.3 0 99 Z" fill="url(#bf)"/><g transform="translate(-4 0.6)"><g transform="translate(0.7 4.7) translate(63.5 56.5) scale(1.07) translate(-63.5 -56.5)"><path d="M63.5 32 L88 56.5 L63.5 81 L39 56.5 Z" fill="none" stroke="#3c8cc1" stroke-width="4" stroke-linejoin="round"/><circle cx="64.5" cy="44.5" r="3.4" fill="#3c8cc1"/><path d="M63 49 L59 57 M63 49 L69 54 L73 54 M62 50 L64 60 L69 68 M63 59 L58 68" stroke="#3c8cc1" stroke-width="3.2" fill="none" stroke-linecap="round" stroke-linejoin="round"/></g></g></svg>
<div class="t" style="left:1689.71px;top:996.24px;font-size:25px;color:#000;transform:scaleX(1.0458);">Public</div>
<div style="left:0px;top:1081px;width:1902px;height:40px;background:#c8c8c8;border-top:2px solid #b5b5b5;border-bottom:1.5px solid #b2b2b2;"></div>
<div style="left:950px;top:1082px;width:2px;height:39px;background:#b1b1b1;"></div>
<div class="t" style="left:252.15px;top:1082.72px;font-size:21.6px;color:#111;transform:scaleX(1.1236);">0 bytes / 0 bytes in 0 / 0 file(s). 0 / 8 dir(s)</div>
<div class="t" style="left:971.52px;top:1082.38px;font-size:22px;color:#111;transform:scaleX(1.0000);">..</div>
<div class="t" style="left:1609.29px;top:1082.55px;font-size:21.5px;color:#111;transform:scaleX(0.9915);">DIR</div>
<div class="t" style="left:1663.77px;top:1082.55px;font-size:21.5px;color:#111;transform:scaleX(1.0712);">15.12.2023, 16:14:03</div>
<div style="left:0px;top:1121px;width:1902px;height:61px;background:#c1c1c1;"></div>
<div class="t" style="left:497.00px;top:1135.45px;font-size:21.8px;color:#111;transform:scaleX(1.2430);">/Users/mac</div>
<div style="left:653px;top:1131px;width:1229px;height:42px;background:#cbcbcb;border:1px solid #b7b7b7;border-radius:9px;box-shadow:0 1px 1px rgba(0,0,0,.10);"></div>
<div style="left:1844.5px;top:1136px;width:33.0px;height:32.5px;background:#d0d0d0;border:1px solid #bdbdbd;border-radius:7px;box-shadow:0 1px 1.5px rgba(0,0,0,.2);"></div>
<svg style="left:1852px;top:1145px;" width="18" height="14" viewBox="0 0 18 14"><path d="M2.3 4 L9 10.5 L15.7 4" fill="none" stroke="#1e1e1e" stroke-width="2.8" stroke-linecap="round" stroke-linejoin="round"/></svg>
<div style="left:0px;top:1180.5px;width:1902px;height:61.5px;background:#c4c4c4;border-top:2.5px solid #8b8b8b;"></div>
<div class="t" style="left:101.36px;top:1193.69px;font-size:25.7px;color:#161616;transform:scaleX(1.0663);">View - F3</div>
<div style="left:315.2px;top:1182px;width:2.6000000000000227px;height:60px;background:#8b8b8b;"></div>
<div class="t" style="left:421.27px;top:1193.69px;font-size:25.7px;color:#161616;transform:scaleX(1.0853);">Edit - F4</div>
<div style="left:632.2px;top:1182px;width:2.599999999999909px;height:60px;background:#8b8b8b;"></div>
<div class="t" style="left:732.13px;top:1193.69px;font-size:25.7px;color:#161616;transform:scaleX(1.0678);">Copy - F5</div>
<div style="left:949.2px;top:1182px;width:2.599999999999909px;height:60px;background:#8b8b8b;"></div>
<div class="t" style="left:1046.29px;top:1193.69px;font-size:25.7px;color:#161616;transform:scaleX(1.0749);">Move - F6</div>
<div style="left:1266.2px;top:1182px;width:2.599999999999909px;height:60px;background:#8b8b8b;"></div>
<div class="t" style="left:1327.81px;top:1193.69px;font-size:25.7px;color:#161616;transform:scaleX(1.0632);">New Folder - F7</div>
<div style="left:1583.2px;top:1182px;width:2.599999999999909px;height:60px;background:#8b8b8b;"></div>
<div class="t" style="left:1674.29px;top:1193.69px;font-size:25.7px;color:#161616;transform:scaleX(1.0766);">Delete - F8</div>
</div>
<div id="dlg">
<div style="left:0px;top:0px;width:1408px;height:55px;background:#c8c8c8;"></div>
<div style="left:0px;top:55px;width:1408px;height:1px;background:#b1b1b1;"></div>
<div style="left:15.75px;top:15.75px;width:23.5px;height:23.5px;border-radius:50%;background:#cb4942;border:1px solid #b93d37;"></div>
<div style="left:54.75px;top:15.75px;width:23.5px;height:23.5px;border-radius:50%;background:#d39c2f;border:1px solid #bf8a25;"></div>
<div style="left:93.75px;top:15.75px;width:23.5px;height:23.5px;border-radius:50%;background:#c2c2c2;border:1px solid #a9a9a9;"></div>
<div class="t" style="left:623.45px;top:6.26px;font-size:25.8px;color:#3a3a3a;font-weight:bold;transform:scaleX(1.0217);">Connections</div>
<div style="left:39px;top:94.3px;width:372px;height:840.7px;background:#c8c8c8;border:1px solid #b3b3b3;border-left:2px solid #b3b3b3;border-bottom:none;border-right-color:#b9b9b9;"></div>
<div style="left:41px;top:96px;width:368px;height:78px;background:#004cb4;"></div>
<svg style="left:66px;top:110.5px;" width="48.1" height="49.5" viewBox="0 0 52.5 54"><defs><linearGradient id="nfd" x1="0" y1="0" x2="0" y2="1"><stop offset="0" stop-color="#559fc3"/><stop offset="0.5" stop-color="#63a8ca"/><stop offset="1" stop-color="#559cc0"/></linearGradient><linearGradient id="nfdb" x1="0" y1="0" x2="0" y2="1"><stop offset="0" stop-color="#c4cfd3"/><stop offset="0.55" stop-color="#c4cfd3"/><stop offset="1" stop-color="#7a868b"/></linearGradient><linearGradient id="nfds" x1="0" y1="0" x2="1" y2="0"><stop offset="0" stop-color="#bdcad0"/><stop offset="0.6" stop-color="#bdcad0"/><stop offset="1" stop-color="#8e9ba1"/></linearGradient></defs><path d="M1.9 2.6 Q1.9 0.5 4 0.5 H15.6 Q17 0.5 18 1.6 L20.3 4.3 H48.4 Q50.6 4.3 50.6 6.5 V14 H1.9 Z" fill="#7fb5d0"/><path d="M1.9 8.6 Q1.9 7 3.5 7 H49 Q50.6 7 50.6 8.6 V37.1 Q50.6 39.1 48.6 39.1 H3.9 Q1.9 39.1 1.9 37.1 Z" fill="url(#nfd)"/><rect x="24.1" y="39.1" width="4.1" height="8" fill="url(#nfds)"/><rect x="0" y="48.9" width="52.4" height="1.9" rx="0.9" fill="#bcc6ca"/><rect x="17" y="46.2" width="18.3" height="6.6" rx="2" fill="url(#nfdb)"/></svg>
<div class="t" style="left:123.85px;top:102.19px;font-size:26px;color:#dddddd;transform:scaleX(1.0354);">New Connection</div>
<div class="t" style="left:124.13px;top:129.91px;font-size:24.5px;color:#dddddd;transform:scaleX(0.9535);">FTP</div>
<div style="left:40px;top:894px;width:371px;height:41px;background:#c6c6c6;border-top:2px solid #8e8e8e;border-bottom:2px solid #8e8e8e;border-left:1.5px solid #8e8e8e;"></div>
<div style="left:84px;top:895px;width:2px;height:39px;background:#8e8e8e;"></div>
<div style="left:131px;top:895px;width:2px;height:39px;background:#8e8e8e;"></div>
<svg style="left:51px;top:903.5px;" width="22" height="22" viewBox="0 0 22 22"><path d="M11 1 V21 M1 11 H21" stroke="#2a2a2a" stroke-width="2.2"/></svg>
<svg style="left:98px;top:903.5px;" width="22" height="22" viewBox="0 0 22 22"><path d="M0.6 11 H21" stroke="#2a2a2a" stroke-width="2.2"/></svg>
<div style="left:426px;top:94.3px;width:943px;height:840.7px;background:#bababa;border:1px solid #b5b5b5;border-radius:9px;"></div>
<div style="left:447px;top:106px;width:895px;height:728px;background:#eeeeee;border-radius:9.5px;"></div>
<svg style="left:478.5px;top:123px;" width="52.5" height="54" viewBox="0 0 52.5 54"><defs><linearGradient id="nfl" x1="0" y1="0" x2="0" y2="1"><stop offset="0" stop-color="#6ccaf5"/><stop offset="0.5" stop-color="#80d3fa"/><stop offset="1" stop-color="#62bdec"/></linearGradient><linearGradient id="nflb" x1="0" y1="0" x2="0" y2="1"><stop offset="0" stop-color="#d6edf6"/><stop offset="0.55" stop-color="#d6edf6"/><stop offset="1" stop-color="#8f9a9e"/></linearGradient><linearGradient id="nfls" x1="0" y1="0" x2="1" y2="0"><stop offset="0" stop-color="#d3ebf5"/><stop offset="0.6" stop-color="#d3ebf5"/><stop offset="1" stop-color="#a9c3cf"/></linearGradient></defs><path d="M1.9 2.6 Q1.9 0.5 4 0.5 H15.6 Q17 0.5 18 1.6 L20.3 4.3 H48.4 Q50.6 4.3 50.6 6.5 V14 H1.9 Z" fill="#93dcff"/><path d="M1.9 8.6 Q1.9 7 3.5 7 H49 Q50.6 7 50.6 8.6 V37.1 Q50.6 39.1 48.6 39.1 H3.9 Q1.9 39.1 1.9 37.1 Z" fill="url(#nfl)"/><rect x="24.1" y="39.1" width="4.1" height="8" fill="url(#nfls)"/><rect x="0" y="48.9" width="52.4" height="1.9" rx="0.9" fill="#cde4ee"/><rect x="17" y="46.2" width="18.3" height="6.6" rx="2" fill="url(#nflb)"/></svg>
<div class="t" style="left:556.30px;top:132.56px;font-size:25.5px;color:#1e1e1e;font-weight:bold;transform:scaleX(1.0245);">FTP/FTPS</div>
<div style="left:467px;top:196.5px;width:861px;height:1.5px;background:#d3d3d3;"></div>
<div style="left:467px;top:598.5px;width:861px;height:1.5px;background:#d3d3d3;"></div>
<div style="left:467px;top:698.5px;width:861px;height:1.5px;background:#d3d3d3;"></div>
<div class="t" style="left:595.86px;top:236.16px;font-size:25.5px;color:#222;transform:scaleX(1.0495);">Name:</div>
<div class="t" style="left:608.46px;top:296.46px;font-size:25.5px;color:#222;transform:scaleX(1.0625);">Type:</div>
<div class="t" style="left:587.79px;top:357.46px;font-size:25.5px;color:#222;transform:scaleX(1.0584);">Server:</div>
<div class="t" style="left:600.83px;top:420.16px;font-size:25.5px;color:#222;transform:scaleX(1.0652);">Login:</div>
<div class="t" style="left:551.90px;top:482.16px;font-size:25.5px;color:#222;transform:scaleX(1.0318);">Password:</div>
<div class="t" style="left:598.81px;top:726.76px;font-size:25.5px;color:#222;transform:scaleX(1.0728);">Mode:</div>
<div class="t" style="left:514.87px;top:787.56px;font-size:25.5px;color:#222;transform:scaleX(1.0444);">Remote path:</div>
<div class="inp" style="left:687px;top:234px;width:400.5px;height:40.5px;"></div>
<div class="t" style="left:692.84px;top:236.84px;font-size:25px;color:#bdbdbd;transform:scaleX(1.0785);">New Connection</div>
<div class="sel" style="left:686px;top:295px;width:403px;height:39.19999999999999px;"></div>
<div class="t" style="left:701.18px;top:294.56px;font-size:25.5px;color:#222;transform:scaleX(0.9899);">FTP</div>
<div class="stp" style="left:1054px;top:299px;width:31.5px;height:31.5px;"></div>
<svg style="left:1054px;top:299px;" width="31.5" height="31.5" viewBox="0 0 31.5 31.5"><path d="M10.3 13 L15.75 7.6 L21.2 13 M10.3 18.8 L15.75 24.2 L21.2 18.8" fill="none" stroke="#fff" stroke-width="2.6" stroke-linecap="round" stroke-linejoin="round"/></svg>
<div class="inp" style="left:687px;top:355px;width:428.5px;height:40.80000000000001px;"></div>
<div class="t" style="left:1142.14px;top:357.46px;font-size:25.5px;color:#222;transform:scaleX(1.1089);">Port:</div>
<div class="inp" style="left:1208px;top:355px;width:102.5px;height:40.80000000000001px;"></div>
<div class="t" style="left:1245.52px;top:358.16px;font-size:25.5px;color:#222;transform:scaleX(1.0045);">21</div>
<div class="inp" style="left:687px;top:418px;width:623.5px;height:40.5px;"></div>
<div class="inp" style="left:687px;top:480px;width:623.5px;height:40.5px;"></div>
<div class="chk" style="left:686.2px;top:541px;width:27.59999999999991px;height:27px;"></div>
<div class="t" style="left:726.30px;top:536.16px;font-size:25.5px;color:#222;transform:scaleX(1.0394);">Anonymous login</div>
<div class="chk" style="left:555.3px;top:636.7px;width:27.600000000000023px;height:27.09999999999991px;"></div>
<div class="t" style="left:593.14px;top:632.16px;font-size:25.5px;color:#222;transform:scaleX(1.0600);">Limit the number of simultaneous connections to</div>
<div style="left:1202.5px;top:630px;width:108.0px;height:39.5px;background:#f5f5f5;border:1px solid #e6e6e6;border-bottom-color:#d4d4d4;"></div>
<div class="t" style="left:1248.41px;top:631.66px;font-size:25.5px;color:#b4b4b4;transform:scaleX(1.0000);">5</div>
<div class="sel" style="left:686px;top:725.7px;width:264px;height:39.299999999999955px;"></div>
<div class="t" style="left:700.94px;top:723.76px;font-size:25.5px;color:#222;transform:scaleX(1.0094);">Passive</div>
<div class="stp" style="left:915.5px;top:729.8px;width:30.799999999999955px;height:31.200000000000045px;"></div>
<svg style="left:915.2px;top:729.6px;" width="31.5" height="31.5" viewBox="0 0 31.5 31.5"><path d="M10.3 13 L15.75 7.6 L21.2 13 M10.3 18.8 L15.75 24.2 L21.2 18.8" fill="none" stroke="#fff" stroke-width="2.6" stroke-linecap="round" stroke-linejoin="round"/></svg>
<div class="inp" style="left:687px;top:785px;width:623.5px;height:41px;"></div>
<div style="left:1101.8px;top:838.9px;width:224.9000000000001px;height:63.10000000000002px;background:#fdd931;border-radius:11px;"></div>
<div style="left:1107.8px;top:845px;width:212.9000000000001px;height:50.799999999999955px;background:#e8e9ed;border-radius:3.5px;"></div>
<div style="left:1117px;top:850.7px;width:195.29999999999995px;height:39.09999999999991px;border-radius:8.5px;background:linear-gradient(#2b90ff,#0476ff);box-shadow:0 1px 2px rgba(20,60,160,.28);"></div>
<div class="t" style="left:1163.46px;top:848.79px;font-size:26px;color:#fff;transform:scaleX(1.0305);">Connect</div>
</div>
</body></html>
